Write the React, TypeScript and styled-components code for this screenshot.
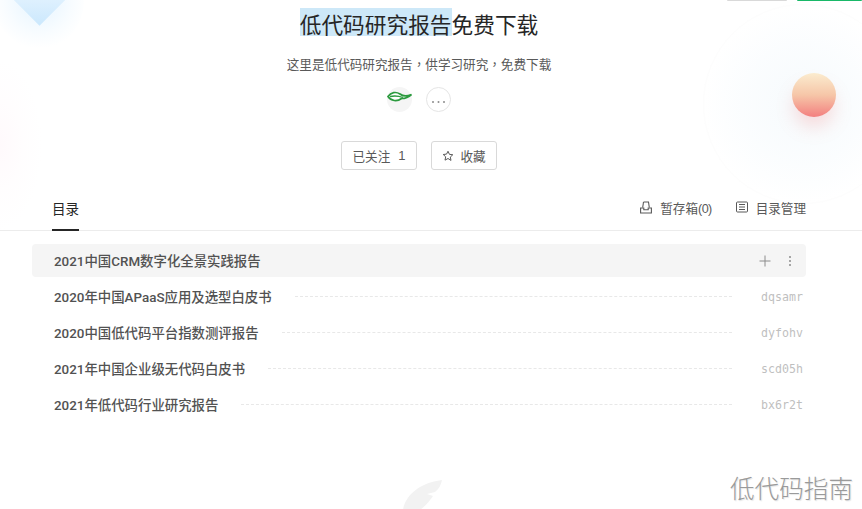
import React from "react";
import styled, { createGlobalStyle } from "styled-components";

const Global = createGlobalStyle`
  html, body { margin: 0; padding: 0; background: #fff; }
  body { font-family: "Liberation Sans", "Noto Sans CJK SC", sans-serif; overflow: hidden; }
`;
const Page = styled.div`
  position: relative; width: 862px; height: 509px; overflow: hidden; background: #fff;
`;
const TopChip = styled.div<{ $c: string; $l: number; $w: number }>`
  position: absolute; top: 0; left: ${p => p.$l}px; width: ${p => p.$w}px; height: 1px;
  background: ${p => p.$c}; border-radius: 0 0 2px 2px;
`;
const Diamond = styled.div`
  position: absolute; left: 21px; top: -19px; width: 37px; height: 37px; transform: rotate(45deg);
  background: linear-gradient(135deg, #f2f9ff, #cbe8fd);
`;
const BlueGlow = styled.div`
  position: absolute; left: -6px; top: -50px; width: 90px; height: 100px; border-radius: 50%;
  background: radial-gradient(circle, rgba(214,238,255,.65) 0%, rgba(238,248,255,.4) 50%, rgba(255,255,255,0) 72%);
`;
const PinkGlow = styled.div`
  position: absolute; left: -42px; top: 60px; width: 84px; height: 170px; border-radius: 50%;
  background: radial-gradient(ellipse closest-side, rgba(255,244,249,.5) 0%, rgba(255,250,252,.35) 55%, rgba(255,255,255,0) 100%);
`;
const BigHalo = styled.div`
  position: absolute; left: 703px; top: 4px; width: 200px; height: 200px; border-radius: 50%; box-sizing: border-box;
  border: 1px solid #fdfdfd;
  background: radial-gradient(circle closest-side at 50% 50%, rgba(244,249,252,.8) 0%, rgba(249,252,254,.7) 60%, rgba(255,255,255,0) 100%);
`;
const Ball = styled.div`
  position: absolute; left: 792px; top: 73px; width: 44px; height: 44px; border-radius: 50%;
  background: linear-gradient(180deg, #fbeccf 0%, #f6c6a8 50%, #f37f7f 100%);
  box-shadow: 0 12px 18px -2px rgba(243,128,125,.25);
`;
const Feather = styled.svg`
  position: absolute; left: 403px; top: 480px;
`;
const Watermark = styled.div`
  position: absolute; left: 730px; top: 472px; font-size: 24.6px; line-height: 30px; color: #9a9a9a;
  font-family: "Noto Sans CJK SC", sans-serif; font-weight: 300; white-space: nowrap;
  text-shadow: 1px 1px 1px rgba(0,0,0,.1);
`;
const Main = styled.div`
  position: relative; display: flex; flex-direction: column;
`;
const Header = styled.header`
  display: flex; flex-direction: column; align-items: center; padding: 8px 56px 0 32px; height: 186px; box-sizing: border-box;
`;
const Title = styled.h1`
  margin: 0; font-size: 21.7px; line-height: 32px; height: 32px; font-weight: 400; color: #262626;
  font-family: "Noto Sans CJK SC", sans-serif; white-space: nowrap;
`;
const Mark = styled.span`
  background: #cde8f8; display: inline-block; height: 28px; line-height: 32px;
`;
const Subtitle = styled.p`
  margin: 15px 0 0; height: 20px; font-size: 12.6px; line-height: 20px; color: #595959; white-space: nowrap;
`;
const Comma = styled.span`
  font-family: "Noto Sans CJK TC", sans-serif; line-height: 0;
`;
const Owners = styled.div`
  display: flex; gap: 14px; margin-top: 12px; align-items: center;
`;
const Avatar = styled.div`
  width: 25px; height: 25px; border-radius: 50%; background: #f5f5f5; display: flex; align-items: flex-start; justify-content: center; padding-top: 4px; box-sizing: border-box;
`;
const More = styled.div`
  width: 23px; height: 23px; border: 1px solid #e5e5e5; border-radius: 50%; display: flex; align-items: center; justify-content: center; background: #fff;
`;
const Actions = styled.div`
  display: flex; gap: 14px; margin-top: 29px;
`;
const Btn = styled.button<{ $w: number }>`
  height: 29px; box-sizing: border-box; border: 1px solid #d9d9d9; border-radius: 3px; background: #fff; color: #595959;
  font: inherit; font-size: 12.6px; display: flex; align-items: center; justify-content: center; gap: 6px; padding: 0;
  width: ${p => p.$w}px;
`;
const FollowCount = styled.span`
  font-size: 13px; margin-left: 2px;
`;
const Tabs = styled.div`
  display: flex; justify-content: space-between; align-items: center; height: 45px; box-sizing: border-box;
  padding: 0 56px 0 52px; border-bottom: 1px solid #ececec;
`;
const Tab = styled.div`
  align-self: stretch; display: flex; align-items: center; font-size: 13.5px; color: #262626; position: relative;
  &::after { content: ""; position: absolute; left: 0; right: 0; bottom: -1px; height: 2px; background: #262626; }
`;
const Tools = styled.div`
  display: flex; gap: 24px; align-items: center; margin-top: -2px;
`;
const Tool = styled.div`
  display: flex; align-items: center; gap: 8px; font-size: 12.6px; color: #595959; white-space: nowrap;
`;
const DraftCount = styled.span`
  letter-spacing: -0.6px;
`;
const List = styled.ul`
  list-style: none; margin: 13px 56px 0 32px; padding: 0; display: flex; flex-direction: column; gap: 3px;
`;
const Row = styled.li<{ $active?: boolean }>`
  height: 33px; display: flex; align-items: center; padding: 0 3px 0 22px; border-radius: 4px;
  background: ${p => (p.$active ? "#f5f5f5" : "transparent")};
`;
const RowTitle = styled.span`
  font-family: Roboto, "Noto Sans CJK SC", sans-serif;
  font-size: 13.4px; font-weight: 500; color: #525252; white-space: nowrap; position: relative; top: -1px;
`;
const Leader = styled.span`
  flex: 1; border-top: 1px dashed #e8e8e8; margin: 0 29px 0 23px;
`;
const Code = styled.span`
  font-family: "DejaVu Sans Mono", monospace; font-size: 11.6px; color: #bfbfbf; width: 42px;
`;
const RowIcons = styled.div`
  margin-left: auto; display: flex; align-items: center; gap: 17px; padding-right: 11px;
`;

const rows = [
  ["2020年中国APaaS应用及选型白皮书", "dqsamr"],
  ["2020中国低代码平台指数测评报告", "dyfohv"],
  ["2021年中国企业级无代码白皮书", "scd05h"],
  ["2021年低代码行业研究报告", "bx6r2t"],
];

export default function App() {
  return (
    <Page>
      <Global />
      <BlueGlow />
      <Diamond />
      <PinkGlow />
      <BigHalo />
      <Ball />
      <TopChip $c="#d9d9d9" $l={727} $w={60} />
      <TopChip $c="#19b868" $l={797} $w={65} />
      <Main>
        <Header>
          <Title><Mark>低代码研究报告</Mark>免费下载</Title>
          <Subtitle>这里是低代码研究报告<Comma>，</Comma>供学习研究<Comma>，</Comma>免费下载</Subtitle>
          <Owners>
            <Avatar>
              <svg width="25" height="12" viewBox="0 0 25 12" fill="none">
                <path d="M1 5.500 C4 1 9 .5 13 3 C16 5.500 20 5.500 24.500 3.500 C21 7 17 7.500 14.500 7.500 C10 11 4 10 1 5.500Z" fill="#fff" stroke="#2b9a3e" strokeWidth="1.7" />
                <path d="M3 5.500 C8 4.500 12 5 16 6.500" stroke="#2b9a3e" strokeWidth="1.3" />
              </svg>
            </Avatar>
            <More>
              <svg width="13" height="23" viewBox="0 0 13 23" fill="#8c8c8c">
                <rect x="0" y="13" width="2" height="2" rx="1" />
                <rect x="5.500" y="13" width="2" height="2" rx="1" />
                <rect x="11" y="13" width="2" height="2" rx="1" />
              </svg>
            </More>
          </Owners>
          <Actions>
            <Btn $w={76}>已关注<FollowCount>1</FollowCount></Btn>
            <Btn $w={66}>
              <svg width="12" height="12" viewBox="0 0 24 24" fill="none" stroke="#595959" strokeWidth="2" strokeLinejoin="round">
                <path d="M12 2.500l2.900 6.200 6.700.8-5 4.600 1.400 6.700L12 17l-6 3.300 1.400-6.700-5-4.600 6.700-.8z" />
              </svg>
              收藏
            </Btn>
          </Actions>
        </Header>
        <Tabs>
          <Tab>目录</Tab>
          <Tools>
            <Tool>
              <svg width="12" height="13" viewBox="0 0 12 13" fill="none" stroke="#595959" strokeWidth="1.1">
                <path d="M3.500 1h5l.8 5.500" />
                <path d="M3.500 1l-.8 5.500" />
                <path d="M.6 7h3.200v1.800h4.400V7h3.200v5H.6z" />
              </svg>
              <span>暂存箱<DraftCount>(0)</DraftCount></span>
            </Tool>
            <Tool>
              <svg width="12" height="12" viewBox="0 0 12 12" fill="none" stroke="#595959" strokeWidth="1">
                <rect x=".5" y="1" width="11" height="10" rx="1" />
                <path d="M3 3.500h6M3 6h6M3 8.500h6" />
              </svg>
              目录管理
            </Tool>
          </Tools>
        </Tabs>
        <List>
          <Row $active>
            <RowTitle>2021中国CRM数字化全景实践报告</RowTitle>
            <RowIcons>
              <svg width="12" height="12" viewBox="0 0 12 12" stroke="#8c8c8c" strokeWidth="1">
                <path d="M6 .5v11M.5 6h11" />
              </svg>
              <svg width="4" height="12" viewBox="0 0 4 12" fill="#a6a6a6">
                <rect x="1" y="1" width="2" height="2" />
                <rect x="1" y="5" width="2" height="2" />
                <rect x="1" y="9" width="2" height="2" />
              </svg>
            </RowIcons>
          </Row>
          {rows.map(([t, c]) => (
            <Row key={c}>
              <RowTitle>{t}</RowTitle>
              <Leader />
              <Code>{c}</Code>
            </Row>
          ))}
        </List>
      </Main>
      <Feather width="40" height="30" viewBox="0 0 40 30">
        <path d="M0 30 C2 16 16 3 39 0 C38 5 36 9 32 12 L24 14 L30 16 C26 22 22 26 17 30 Z" fill="#f2f2f2" />
      </Feather>
      <Watermark>低代码指南</Watermark>
    </Page>
  );
}
